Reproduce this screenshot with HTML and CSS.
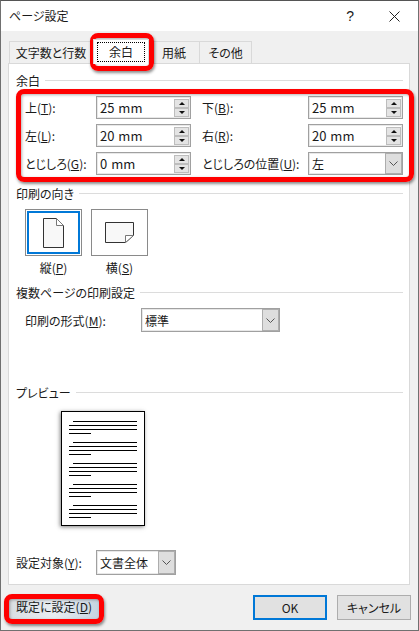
FILE: index.html
```html
<!DOCTYPE html>
<html lang="ja">
<head>
  <meta charset="UTF-8">
  <title>ページ設定</title>
  <link rel="stylesheet" href="styles.css">
</head>
<body>
  <div class="dialog">
    <div class="titlebar">
      <span class="title">ページ設定</span>
      <span class="help">?</span>
      <svg class="close" width="11" height="11" viewBox="0 0 11 11"><path d="M0.5 0.5L10.5 10.5M10.5 0.5L0.5 10.5" stroke="#222" stroke-width="1" fill="none"/></svg>
    </div>

    <div class="tabs">
      <div class="tab tab-first">文字数と行数</div>
      <div class="tab tab-active"><span class="focus">余白</span></div>
      <div class="tab tab-paper">用紙</div>
      <div class="tab tab-other">その他</div>
    </div>

    <div class="panel">
      <div class="section section-margin"><span>余白</span></div>
      <div class="margin-grid">
        <label class="lbl">上(<u>T</u>):</label>
        <div class="spin"><span>25 mm</span><div class="arrows"><i class="up"></i><i class="down"></i></div></div>
        <label class="lbl">下(<u>B</u>):</label>
        <div class="spin"><span>25 mm</span><div class="arrows"><i class="up"></i><i class="down"></i></div></div>
        <label class="lbl">左(<u>L</u>):</label>
        <div class="spin"><span>20 mm</span><div class="arrows"><i class="up"></i><i class="down"></i></div></div>
        <label class="lbl">右(<u>R</u>):</label>
        <div class="spin"><span>20 mm</span><div class="arrows"><i class="up"></i><i class="down"></i></div></div>
        <label class="lbl">とじしろ(<u>G</u>):</label>
        <div class="spin"><span>0 mm</span><div class="arrows"><i class="up"></i><i class="down"></i></div></div>
        <label class="lbl">とじしろの位置(<u>U</u>):</label>
        <div class="select"><span>左</span><div class="drop"><svg width="9" height="5" viewBox="0 0 9 5"><path d="M0.5 0.5L4.5 4.5L8.5 0.5" stroke="#555" fill="none"/></svg></div></div>
      </div>

      <div class="section section-orient"><span>印刷の向き</span></div>
      <div class="orient">
        <div class="orient-item">
          <div class="orient-btn orient-btn-on">
            <svg width="21" height="30" viewBox="0 0 21 30"><path d="M0.5 0.5H13.5L20.5 7.5V29.5H0.5Z" fill="#f8f8f8" stroke="#333"/><path d="M13.5 0.5V7.5H20.5Z" fill="#fff" stroke="#777"/></svg>
          </div>
          <div class="orient-label">縦(<u>P</u>)</div>
        </div>
        <div class="orient-item">
          <div class="orient-btn">
            <svg width="29" height="21" viewBox="0 0 29 21"><path d="M0.5 0.5H28.5V13.5L20.5 20.5H0.5Z" fill="#f8f8f8" stroke="#333"/><path d="M28.5 13.5H20.5V20.5Z" fill="#fff" stroke="#777"/></svg>
          </div>
          <div class="orient-label">横(<u>S</u>)</div>
        </div>
      </div>

      <div class="section section-multi"><span>複数ページの印刷設定</span></div>
      <div class="multi-row">
        <label class="lbl multi-lbl">印刷の形式(<u>M</u>):</label>
        <div class="select select-multi"><span>標準</span><div class="drop"><svg width="9" height="5" viewBox="0 0 9 5"><path d="M0.5 0.5L4.5 4.5L8.5 0.5" stroke="#555" fill="none"/></svg></div></div>
      </div>

      <div class="section section-preview"><span>プレビュー</span></div>
      <div class="sheet">
        <div class="para"><b class="first"></b><b></b><b></b><b class="last"></b></div>
        <div class="para"><b class="first"></b><b></b><b></b><b class="last"></b></div>
        <div class="para"><b class="first"></b><b></b><b></b><b class="last"></b></div>
        <div class="para"><b class="first"></b><b></b><b></b><b class="last"></b></div>
        <div class="para"><b class="first"></b><b></b><b></b><b class="last"></b></div>
      </div>

      <div class="target-row">
        <label class="lbl target-lbl">設定対象(<u>Y</u>):</label>
        <div class="select select-target"><span>文書全体</span><div class="drop"><svg width="9" height="5" viewBox="0 0 9 5"><path d="M0.5 0.5L4.5 4.5L8.5 0.5" stroke="#555" fill="none"/></svg></div></div>
      </div>
    </div>

    <div class="footer">
      <div class="btn btn-default">既定に設定(<u>D</u>)</div>
      <div class="btn btn-ok">OK</div>
      <div class="btn btn-cancel">キャンセル</div>
    </div>

    <div class="mark mark-tab"></div>
    <div class="mark mark-grid"></div>
    <div class="mark mark-default"></div>
  </div>
</body>
</html>
```

FILE: styles.css
```css
html, body {
  margin: 0;
  padding: 0;
}
body {
  font-family: "Noto Sans CJK JP", "Noto Sans", sans-serif;
  font-size: 12px;
  font-feature-settings: "palt";
  color: #1a1a1a;
}
.dialog {
  position: relative;
  width: 419px;
  height: 631px;
  box-sizing: border-box;
  background-color: #f0f0f0;
  border: 1px solid #707070;
  border-top-color: #555;
  overflow: hidden;
}
.titlebar {
  display: flex;
  align-items: center;
  height: 30px;
  background-color: #fff;
  padding-left: 8px;
}
.title {
  flex: 1;
  margin-top: -2px;
}
.help {
  font-family: "Liberation Sans", sans-serif;
  font-size: 14px;
  margin-right: 35px;
}
.close {
  margin-right: 18px;
}
.tabs {
  display: flex;
  align-items: flex-end;
  height: 32px;
  margin-left: 8px;
}
.tab {
  box-sizing: border-box;
  height: 22px;
  line-height: 21px;
  text-align: center;
  background-color: #f0f0f0;
  border: 1px solid #d9d9d9;
  border-bottom: none;
}
.tab-first {
  width: 84px;
}
.tab-active {
  width: 56px;
  height: 25px;
  line-height: 22px;
  background-color: #fff;
  padding: 2px 3px;
  position: relative;
  z-index: 1;
  margin-bottom: -1px;
}
.focus {
  display: block;
  border: 1px dotted #000;
  height: 18px;
  line-height: 17px;
}
.tab-paper {
  width: 51px;
  border-left: none;
}
.tab-other {
  width: 52px;
  border-left: none;
}
.panel {
  box-sizing: border-box;
  width: 402px;
  height: 522px;
  margin-left: 7px;
  background-color: #fff;
  border: 1px solid #d9d9d9;
  padding: 0 6px 0 7px;
}
.section {
  display: flex;
  align-items: center;
  gap: 5px;
  height: 18px;
}
.section::after {
  content: "";
  flex: 1;
  height: 1px;
  background-color: #dcdcdc;
}
.section-margin {
  margin-top: 7px;
}
.margin-grid {
  display: grid;
  grid-template-columns: 71px 95px 117px 95px;
  grid-auto-rows: 23px;
  row-gap: 5px;
  margin-top: 7px;
  margin-left: 9px;
  align-items: center;
}
.lbl {
  white-space: nowrap;
}
.margin-grid .lbl:nth-child(4n+3) {
  padding-left: 11px;
}
.spin, .select {
  box-sizing: border-box;
  display: flex;
  align-items: center;
  justify-content: space-between;
  height: 23px;
  border: 1px solid #a0a0a0;
  box-shadow: inset 0 0 0 1px #e8e8e8;
  background-color: #fff;
  padding-left: 3px;
}
.spin {
  font-size: 13px;
  word-spacing: 1px;
}
.arrows {
  display: flex;
  flex-direction: column;
  margin-right: 1px;
}
.arrows i {
  display: flex;
  align-items: center;
  justify-content: center;
  width: 15px;
  height: 9px;
  background-color: #e4e4e4;
  border: 1px solid #bdbdbd;
  box-sizing: border-box;
}
.arrows i::before {
  content: "";
  border-left: 3px solid transparent;
  border-right: 3px solid transparent;
}
.arrows .up::before {
  border-bottom: 3px solid #111;
}
.arrows .down::before {
  border-top: 3px solid #111;
}
.drop {
  display: flex;
  align-items: center;
  justify-content: center;
  width: 17px;
  height: 100%;
  background-color: #dedede;
  box-shadow: inset 0 0 0 1px #adadad;
}
.section-orient {
  margin-top: 9px;
}
.orient {
  display: flex;
  gap: 9px;
  margin-top: 7px;
  margin-left: 9px;
}
.orient-item {
  width: 57px;
  text-align: center;
}
.orient-btn {
  box-sizing: border-box;
  display: flex;
  align-items: center;
  justify-content: center;
  height: 47px;
  border: 1px solid #8a8a8a;
}
.orient-btn-on {
  box-shadow: inset 0 0 0 1px #fff, inset 0 0 0 3px #0078d7;
}
.orient-label {
  margin-top: 3px;
  line-height: 18px;
}
.section-multi {
  margin-top: 6px;
}
.multi-row {
  display: flex;
  align-items: center;
  margin-top: 7px;
  margin-left: 9px;
}
.multi-lbl {
  width: 116px;
}
.select-multi {
  width: 139px;
  height: 24px;
}
.section-preview {
  margin-top: 51px;
}
.sheet {
  box-sizing: border-box;
  width: 84px;
  height: 115px;
  margin-top: 10px;
  margin-left: 45px;
  background-color: #fff;
  border: 1px solid #000;
  box-shadow: -1px 1px 4px rgba(0, 0, 0, 0.5);
  padding: 9px 7px 0;
}
.para {
  margin-bottom: 8px;
}
.para b {
  display: block;
  height: 1px;
  background-color: #000;
  margin-bottom: 3px;
}
.para .first {
  margin-left: 4px;
}
.para .last {
  width: 22px;
}
.target-row {
  display: flex;
  align-items: center;
  margin-top: 24px;
}
.target-lbl {
  width: 80px;
}
.select-target {
  width: 80px;
  height: 25px;
}
.footer {
  position: relative;
  display: flex;
  align-items: center;
  height: 45px;
  padding-left: 8px;
}
.btn {
  box-sizing: border-box;
  height: 25px;
  line-height: 23px;
  text-align: center;
  background-color: #e1e1e1;
  border: 1px solid #adadad;
}
.btn-default {
  width: 90px;
  margin-right: auto;
  background: linear-gradient(90deg, #d9dde2, #e8edf2 50%, #c5d3e0);
  border: none;
}
.btn-ok {
  width: 74px;
  margin-right: 10px;
  border: 2px solid #0078d7;
  line-height: 21px;
}
.btn-cancel {
  width: 74px;
  margin-right: 7px;
}
.mark {
  position: absolute;
  box-sizing: border-box;
  border: 5px solid #f00;
  border-radius: 8px;
  box-shadow: 1px 2px 3px rgba(0, 0, 0, 0.45), inset 1px 1px 3px rgba(0, 0, 0, 0.3);
}
.mark-tab {
  left: 89px;
  top: 32px;
  width: 64px;
  height: 38px;
}
.mark-grid {
  left: 15px;
  top: 88px;
  width: 398px;
  height: 93px;
}
.mark-default {
  left: 3px;
  top: 593px;
  width: 100px;
  height: 30px;
}
```
